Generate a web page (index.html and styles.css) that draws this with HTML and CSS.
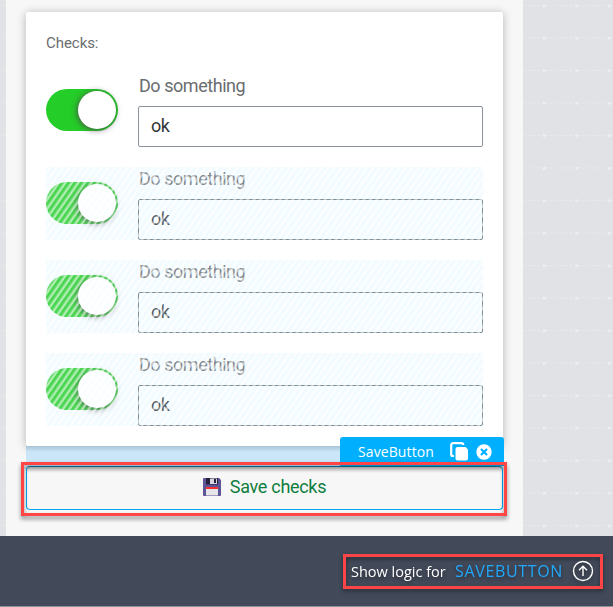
FILE: index.html
```html
<!DOCTYPE html>
<html lang="en">
<head>
<meta charset="utf-8">
<title>Checks</title>
<link rel="stylesheet" href="styles.css">
</head>
<body>
<div class="workspace">
  <main class="page">
    <section class="card">
      <h1 class="title">Checks:</h1>
      <div class="row">
        <span class="toggle"><span class="knob"></span></span>
        <div class="field"><span class="label">Do something</span><div class="input">ok</div></div>
      </div>
      <div class="row repeated">
        <span class="toggle"><span class="knob"></span></span>
        <div class="field"><span class="label">Do something</span><div class="input">ok</div></div>
      </div>
      <div class="row repeated">
        <span class="toggle"><span class="knob"></span></span>
        <div class="field"><span class="label">Do something</span><div class="input">ok</div></div>
      </div>
      <div class="row repeated">
        <span class="toggle"><span class="knob"></span></span>
        <div class="field"><span class="label">Do something</span><div class="input">ok</div></div>
      </div>
    </section>
    <div class="save-wrap">
      <div class="tag">
        <span class="tag-name">SaveButton</span>
        <svg class="copy" width="20" height="20" viewBox="0 0 20 20">
          <path d="M4 14H3a1.800 1.800 0 0 1-1.800-1.800V3A1.800 1.800 0 0 1 3 1.200h8.500a1.800 1.800 0 0 1 1.800 1.800" fill="none" stroke="#fff" stroke-width="2.200"/>
          <path d="M7.500 5H15.500L18 7.500V16.500a2 2 0 0 1-2 2H7.500a2 2 0 0 1-2-2V7a2 2 0 0 1 2-2z" fill="#fff"/>
        </svg>
        <svg class="close" width="16" height="16" viewBox="0 0 16 16">
          <circle cx="8" cy="8" r="7.700" fill="#fff"/>
          <path d="M5 5l6 6M11 5l-6 6" stroke="#00b0ff" stroke-width="2.200"/>
        </svg>
      </div>
      <div class="save">
        <svg width="18" height="18" viewBox="0 0 18 18">
          <path d="M1 0h15l2 2v15a1 1 0 0 1-1 1H1a1 1 0 0 1-1-1V1a1 1 0 0 1 1-1z" fill="#5e5596"/>
          <path d="M3 0h12v6.500H3z" fill="#27203f"/>
          <path d="M7 .5h7v5.500H7z" fill="#d8d6df"/>
          <path d="M11 1h2v4h-2z" fill="#27203f"/>
          <path d="M3 9h12v8.500H3z" fill="#e6e5e9"/>
          <path d="M3 9h12v2H3z" fill="#f5302f"/>
        </svg>
        <span class="save-text">Save checks</span>
      </div>
      <div class="mark"></div>
    </div>
  </main>
</div>
<footer class="bar">
  <div class="logic">
    <span class="logic-text">Show logic for</span>
    <span class="logic-name">SAVEBUTTON</span>
    <svg width="22" height="22" viewBox="0 0 22 22" fill="none" stroke="#fff" stroke-width="1.400">
      <circle cx="11" cy="11" r="9.500"/>
      <path d="M11 16V6.500M7 10.200l4-4 4 4"/>
    </svg>
  </div>
</footer>
</body>
</html>
```
FILE: styles.css
```css
* { box-sizing: border-box; }
body {
  margin: 0;
  width: 613px;
  height: 607px;
  overflow: hidden;
  font-family: Roboto, "Liberation Sans", sans-serif;
}
.workspace {
  height: 536px;
  padding-left: 6px;
  background-color: #e1e2e6;
  background-image:
    radial-gradient(circle at 1px 1px, #eeeff1 1px, transparent 2.500px),
    repeating-linear-gradient(90deg, #e1e2e6 0 2px, transparent 2px 5px),
    linear-gradient(#e8e9eb 1px, transparent 1px),
    linear-gradient(90deg, #e3e4e8 1px, transparent 1px);
  background-size: 32.5px 32.5px, 32.5px 32.5px, 32.5px 32.5px, 32.5px 32.5px;
  background-position: 23px 4.500px, 23px 5px, 23px 5px, 23.500px 5px;
}
.page {
  width: 517px;
  height: 536px;
  padding: 12px 20px 0;
  background: #f7f7f7;
}
.card {
  position: relative;
  width: 477px;
  height: 434px;
  padding: 20px 20px 0;
  background: #fff;
  border-radius: 2px;
  box-shadow: 0 1px 10px rgba(0, 0, 0, .28);
  display: flex;
  flex-direction: column;
  gap: 20px;
}
.title {
  height: 22px;
  margin: 0;
  font-size: 15px;
  line-height: 22px;
  font-weight: 400;
  color: #6a6d70;
  letter-spacing: -.05px;
}
.row {
  position: relative;
  width: 437px;
  height: 73px;
  display: flex;
  align-items: center;
  gap: 20px;
}
.toggle {
  width: 72px;
  height: 42px;
  margin-bottom: 1px;
  padding: 2px 2px 2px 32px;
  border-radius: 21px;
  background: #24cd27;
}
.knob {
  display: block;
  width: 38px;
  height: 38px;
  border-radius: 50%;
  background: #fff;
  box-shadow: -1px 1px 6px rgba(80, 50, 80, .75);
}
.field { width: 345px; height: 73px; }
.label {
  display: block;
  height: 32px;
  padding-left: 1px;
  line-height: 24px;
  font-size: 18px;
  letter-spacing: -.45px;
  color: #6a6d70;
}
.input {
  height: 41px;
  padding-left: 12px;
  border: 1px solid #89919a;
  border-radius: 2px;
  line-height: 38px;
  font-size: 18px;
  letter-spacing: -.45px;
  color: #32363a;
}
.repeated::after {
  content: "";
  position: absolute;
  inset: 0;
  background: repeating-linear-gradient(125deg,
    rgba(228, 247, 255, .2) 0, rgba(228, 247, 255, .2) 1.500px,
    rgba(255, 255, 255, .65) 3.500px, rgba(255, 255, 255, .65) 4.300px,
    rgba(228, 247, 255, .2) 5.300px);
}
.repeated { background: #f5fcff; }
.repeated .input { border-color: #65747c; }
.repeated .knob { box-shadow: -1px 2px 6px rgba(60, 50, 60, .7); }
.save-wrap {
  position: relative;
  width: 477px;
  height: 64px;
  padding-top: 20px;
  background: linear-gradient(#a9c5d5 0, #cae6f8 6px, #cae6f8 20px, transparent 20px);
}
.tag {
  position: absolute;
  left: 314px;
  top: -9px;
  width: 164px;
  height: 29px;
  padding: 1px 12px 0 18px;
  display: flex;
  align-items: center;
  background: #00b0ff;
  border-radius: 3px 3px 0 0;
  color: #fff;
}
.tag-name {
  width: 92px;
  font: 14px/28px "Open Sans", sans-serif;
  letter-spacing: .1px;
}
.copy { margin-right: 6px; }
.save {
  height: 44px;
  display: flex;
  align-items: center;
  justify-content: center;
  gap: 9px;
  padding-bottom: 3px;
  background: linear-gradient(#cfcfcf 0, #f7f7f7 6px);
  border: 1px solid #00a8ed;
  border-top-color: #087eae;
  border-radius: 4px;
}
.save-text { font-size: 18px; line-height: 24px; color: #107e3e; letter-spacing: -.3px; }
.mark {
  position: absolute;
  left: -5px;
  top: 16px;
  width: 486px;
  height: 54px;
  border: 3px solid #ff4545;
  filter: drop-shadow(0 3px 2px rgba(0, 0, 0, .45));
}
.bar {
  height: 71px;
  padding: 18px 10px 0 0;
  display: flex;
  justify-content: flex-end;
  background: #424959;
  border-bottom: 1px solid #8e929b;
}
.logic {
  width: 260px;
  height: 35px;
  padding: 0 0 1px 5px;
  display: flex;
  align-items: center;
  border: 3px solid #ff4545;
  filter: drop-shadow(0 2px 2px rgba(0, 0, 0, .45));
  font-family: "Open Sans", sans-serif;
  white-space: nowrap;
}
.logic-text { width: 104px; font-size: 14.500px; color: #fff; }
.logic-name { width: 117px; font-size: 16px; letter-spacing: .65px; color: #21a8fb; }
```
